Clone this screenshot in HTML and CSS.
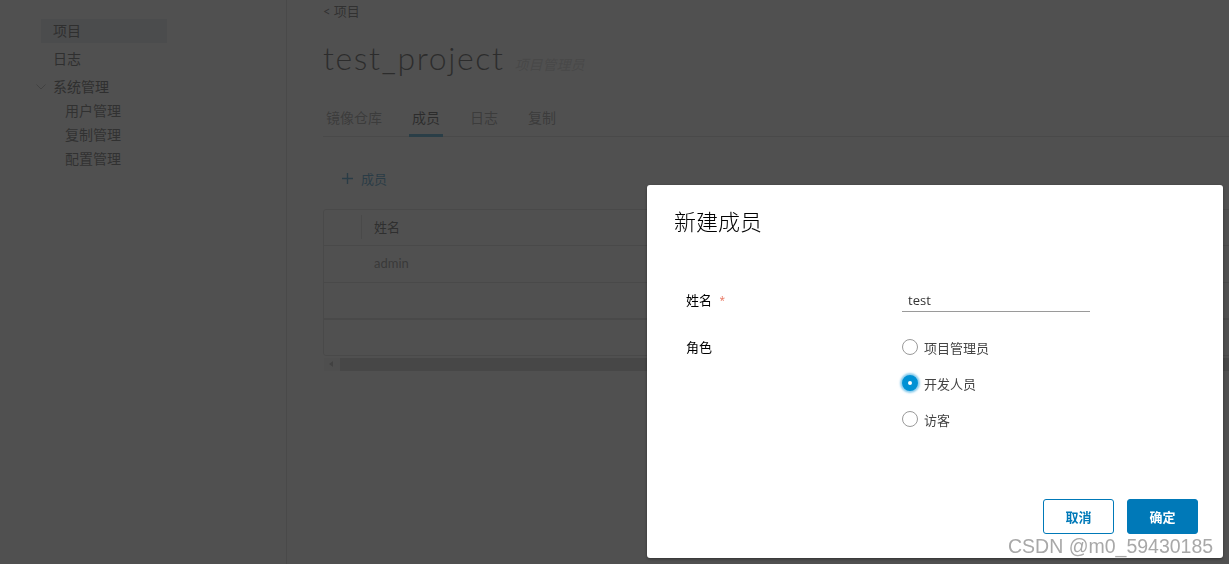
FILE: index.html
```
<!DOCTYPE html>
<html lang="zh-CN">
<head>
<meta charset="utf-8">
<title>test_project - 成员</title>
<link rel="stylesheet" href="styles.css">
</head>
<body>
<div class="app">
  <aside class="sidebar">
    <nav class="nav">
      <a class="nav-item active">项目</a>
      <a class="nav-item">日志</a>
      <div class="nav-group">
        <svg class="chev" width="10" height="6" viewBox="0 0 10 6"><path d="M0.5 0.5 L5 5 L9.5 0.5" fill="none" stroke="#9a9a9a" stroke-width="1"/></svg>
        <span>系统管理</span>
      </div>
      <a class="nav-sub">用户管理</a>
      <a class="nav-sub">复制管理</a>
      <a class="nav-sub">配置管理</a>
    </nav>
  </aside>
  <main class="main">
    <div class="crumb">&lt; 项目</div>
    <div class="title-row">
      <h1 class="title">test_project</h1>
      <span class="role">项目管理员</span>
    </div>
    <ul class="tabs">
      <li class="tab">镜像仓库</li>
      <li class="tab active">成员</li>
      <li class="tab">日志</li>
      <li class="tab">复制</li>
    </ul>
    <div class="add-btn">
      <svg width="11" height="11" viewBox="0 0 11 11"><path d="M5.5 0 V11 M0 5.5 H11" stroke="#0079b8" stroke-width="1.4"/></svg>
      <span>成员</span>
    </div>
    <div class="grid">
      <div class="grid-head">
        <div class="cell-sel"><span class="col-sep"></span></div>
        <div class="cell">姓名</div>
      </div>
      <div class="grid-row">
        <div class="cell-sel"></div>
        <div class="cell light">admin</div>
      </div>
      <div class="grid-row empty"></div>
      <div class="grid-foot"></div>
    </div>
    <div class="hscroll">
      <span class="arrow"></span>
      <span class="thumb"></span>
    </div>
  </main>
</div>

<div class="backdrop"></div>

<div class="modal">
  <div class="modal-header">
    <h3 class="modal-title">新建成员</h3>
  </div>
  <form class="modal-body">
    <div class="form-row">
      <label class="form-label">姓名 <span class="req">*</span></label>
      <input class="text-input" type="text" value="test">
    </div>
    <div class="form-row">
      <label class="form-label">角色</label>
      <div class="radios">
        <label class="radio"><span class="dot"></span>项目管理员</label>
        <label class="radio"><span class="dot checked"></span>开发人员</label>
        <label class="radio"><span class="dot"></span>访客</label>
      </div>
    </div>
  </form>
  <div class="modal-footer">
    <button class="btn btn-outline" type="button">取消</button>
    <button class="btn btn-primary" type="button">确定</button>
  </div>
</div>

<div class="watermark">CSDN @m0_59430185</div>
</body>
</html>
```
FILE: styles.css
```
* { box-sizing: border-box; }
html, body { margin: 0; padding: 0; height: 100%; }
body {
  font-family: Lato, "Noto Sans CJK SC", sans-serif;
  color: #333;
  background: #fff;
  overflow: hidden;
}

.app { display: flex; height: 100vh; }

.sidebar {
  width: 287px;
  flex: none;
  background: #fafafa;
  border-right: 1px solid #d0d0d0;
  padding: 19px 0 0 41px;
}
.nav { display: flex; flex-direction: column; }
.nav-item {
  width: 126px;
  height: 24px;
  line-height: 24px;
  padding-left: 12px;
  font-size: 14px;
  color: #222;
  margin-bottom: 4px;
}
.nav-item.active { background: #d9e0e8; }
.nav-group {
  position: relative;
  height: 24px;
  line-height: 24px;
  padding-left: 12px;
  font-size: 14px;
  color: #222;
}
.chev { position: absolute; left: -5px; top: 9px; }
.nav-sub {
  height: 24px;
  line-height: 24px;
  padding-left: 24px;
  font-size: 14px;
  color: #333;
}

.main {
  flex: 1;
  min-width: 0;
  overflow: hidden;
  padding: 2px 0 0 36px;
}
.crumb { font-size: 13px; line-height: 18px; color: #333; }
.title-row { display: flex; align-items: baseline; margin-top: 18px; }
.title {
  margin: 0;
  font-size: 32px;
  line-height: 40px;
  font-weight: 300;
  letter-spacing: 1.6px;
  color: #111;
}
.role {
  margin-left: 10px;
  font-size: 14px;
  font-style: italic;
  color: #c8c8c8;
}

.tabs {
  list-style: none;
  margin: 20px 0 0;
  padding: 0;
  display: flex;
  gap: 24px;
  border-bottom: 1px solid #ccc;
}
.tab {
  padding: 4px 3px 0;
  line-height: 32px;
  font-size: 14px;
  color: #777;
  border-bottom: 3px solid transparent;
  margin-bottom: -1px;
}
.tab.active { color: #111; border-bottom-color: #0085c3; }

.add-btn {
  margin: 23px 0 0 19px;
  height: 36px;
  display: flex;
  align-items: center;
  gap: 8px;
  font-size: 13px;
  color: #0079b8;
}

.grid {
  margin-top: 13px;
  margin-right: -20px;
  border: 1px solid #ccc;
  border-radius: 3px;
}
.grid-head, .grid-row { display: flex; height: 37px; border-bottom: 1px solid #ccc; }
.grid-head { height: 36px; }
.grid-row.empty { height: 37px; border-bottom: 2px solid #ccc; }
.grid-foot { height: 35px; }
.cell-sel { width: 38px; position: relative; flex: none; }
.col-sep { position: absolute; right: 0; top: 5px; height: 24px; border-right: 1px solid #ccc; }
.cell { padding-left: 12px; font-size: 13px; line-height: 34px; color: #222; }
.cell.light { color: #666; }

.hscroll { display: flex; height: 13px; margin-top: 2px; margin-left: 1px; }
.arrow {
  width: 16px;
  position: relative;
  background: #f1f1f1;
}
.arrow::after {
  content: "";
  position: absolute;
  left: 5px; top: 3px;
  border-style: solid;
  border-width: 3.5px 4px 3.5px 0;
  border-color: transparent #999 transparent transparent;
}
.thumb { flex: 1; background: #c1c1c1; }

.backdrop {
  position: fixed;
  inset: 0;
  background: rgba(49, 49, 49, 0.85);
}

.modal {
  position: fixed;
  left: 647px;
  top: 185px;
  width: 576px;
  height: 373px;
  background: #fff;
  border-radius: 3px;
  box-shadow: 0 1px 3px rgba(0,0,0,0.4);
  display: flex;
  flex-direction: column;
  font-family: "Open Sans", "Noto Sans CJK SC", sans-serif;
}
.modal-header { padding: 22px 25px 0 27px; }
.modal-title {
  margin: 0;
  font-size: 22px;
  line-height: 28px;
  font-weight: 300;
  color: #000;
}
.modal-body { margin-top: 53px; padding-left: 39px; }
.form-row { display: grid; grid-template-columns: 216px 1fr; align-items: start; }
.form-row + .form-row { margin-top: 23px; }
.form-label { font-size: 13px; line-height: 24px; color: #000; }
.req { color: #e8705a; font-size: 10px; margin-left: 4px; vertical-align: top; }
.text-input {
  width: 188px;
  height: 24px;
  border: none;
  border-bottom: 1px solid #9a9a9a;
  padding: 0 6px;
  font-family: "Open Sans", sans-serif;
  font-size: 13px;
  color: #333;
  outline: none;
}
.radios { display: flex; flex-direction: column; gap: 12px; }
.radio {
  display: flex;
  align-items: center;
  gap: 6px;
  height: 24px;
  font-size: 13px;
  color: #444;
}
.dot {
  width: 16px;
  height: 16px;
  border-radius: 50%;
  border: 1px solid #9a9a9a;
  background: #fff;
  flex: none;
}
.dot.checked {
  border: 6px solid #0091d4;
  box-shadow: 0 0 2px 2px rgba(0, 145, 212, 0.45);
}

.modal-footer {
  margin-top: auto;
  padding: 0 25px 24px;
  display: flex;
  justify-content: flex-end;
  gap: 13px;
}
.btn {
  width: 71px;
  height: 35px;
  border-radius: 3px;
  font-family: "Open Sans", "Noto Sans CJK SC", sans-serif;
  font-size: 13px;
  font-weight: 600;
  cursor: pointer;
}
.btn-outline { background: #fff; border: 1px solid #0079b8; color: #0079b8; }
.btn-primary { background: #0079b8; border: 1px solid #0079b8; color: #fff; }

.watermark {
  position: fixed;
  left: 1008px;
  top: 536px;
  font-family: "Liberation Sans", sans-serif;
  font-size: 19.5px;
  line-height: 20px;
  color: #a8a8a8;
  text-shadow: 0 0 1px #fff, 0 0 1px #fff;
  white-space: nowrap;
}
```
